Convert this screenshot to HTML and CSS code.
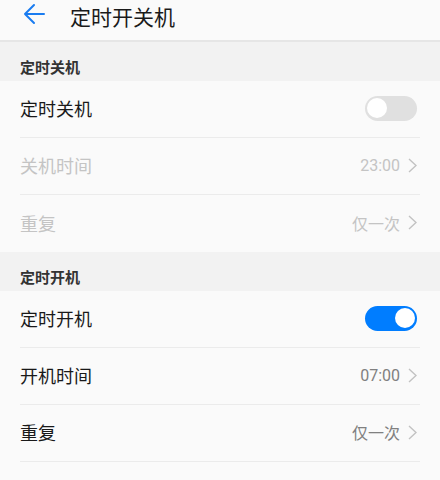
FILE: index.html
```html
<!DOCTYPE html>
<html lang="zh-CN">
<head>
    <meta charset="UTF-8">
    <title>定时开关机</title>
    <link rel="stylesheet" href="styles.css">
</head>
<body>

<div class="topbar">
    <svg class="back" width="22" height="22" viewBox="0 0 22 22">
        <path d="M21 11H2M11 2L2 11l9 9" fill="none" stroke="#1a7cf0" stroke-width="2" stroke-linecap="round" stroke-linejoin="round"/>
    </svg>
    <span class="title">定时开关机</span>
</div>

<div class="group-title">定时关机</div>
<ul class="list">
    <li class="row">
        <span class="label">定时关机</span>
        <span class="switch"><i></i></span>
    </li>
    <li class="row off">
        <span class="label">关机时间</span>
        <span class="value">23:00</span>
        <svg class="arrow" width="9" height="15" viewBox="0 0 9 15"><path d="M1 1l7 6.5L1 14" fill="none" stroke="#c2c2c2" stroke-width="1.4"/></svg>
    </li>
    <li class="row off last">
        <span class="label">重复</span>
        <span class="value">仅一次</span>
        <svg class="arrow" width="9" height="15" viewBox="0 0 9 15"><path d="M1 1l7 6.5L1 14" fill="none" stroke="#c2c2c2" stroke-width="1.4"/></svg>
    </li>
</ul>

<div class="group-title">定时开机</div>
<ul class="list">
    <li class="row">
        <span class="label">定时开机</span>
        <span class="switch on"><i></i></span>
    </li>
    <li class="row">
        <span class="label">开机时间</span>
        <span class="value">07:00</span>
        <svg class="arrow" width="9" height="15" viewBox="0 0 9 15"><path d="M1 1l7 6.5L1 14" fill="none" stroke="#c2c2c2" stroke-width="1.4"/></svg>
    </li>
    <li class="row">
        <span class="label">重复</span>
        <span class="value">仅一次</span>
        <svg class="arrow" width="9" height="15" viewBox="0 0 9 15"><path d="M1 1l7 6.5L1 14" fill="none" stroke="#c2c2c2" stroke-width="1.4"/></svg>
    </li>
</ul>

</body>
</html>
```

FILE: styles.css
```css
body {
    margin: 0;
    background-color: #fafafa;
    font-family: "Noto Sans CJK SC", "Noto Sans", sans-serif;
    color: #191919;
}
ul, li {
    list-style: none;
    padding: 0;
    margin: 0;
}
.topbar {
    display: flex;
    align-items: center;
    height: 42px;
    padding: 0 0 12px 23px;
    box-sizing: border-box;
    border-bottom: 2px solid #e6e6e6;
}
.topbar .title {
    margin-left: 25px;
    margin-top: 3px;
    font-size: 21px;
    color: #1a1a1a;
}
.group-title {
    height: 39px;
    line-height: 22px;
    padding: 14px 20px 0;
    box-sizing: border-box;
    background-color: #f2f2f2;
    font-size: 15px;
    font-weight: bold;
    color: #333;
}
.list {
    padding: 0 20px;
}
.row {
    display: flex;
    align-items: center;
    height: 57px;
    box-sizing: border-box;
    border-bottom: 1px solid #ebebeb;
    padding-bottom: 2px;
}
.row.last {
    border-bottom: none;
}
.row .label {
    flex: 1;
    font-size: 18px;
}
.row .value {
    font-family: Roboto, "Noto Sans CJK SC", sans-serif;
    font-size: 16px;
    color: #808080;
    margin-right: 8px;
}
.row.off .label,
.row.off .value {
    color: #c4c4c4;
}
.arrow {
    margin-right: 3px;
}
.switch {
    display: flex;
    align-items: center;
    width: 52px;
    height: 25px;
    border-radius: 13px;
    background-color: #e0e0e0;
    padding: 0 2px;
    box-sizing: border-box;
    margin-right: 3px;
}
.switch i {
    width: 20px;
    height: 20px;
    border-radius: 50%;
    background-color: #fff;
}
.switch.on {
    background-color: #007dff;
    justify-content: flex-end;
}
```
